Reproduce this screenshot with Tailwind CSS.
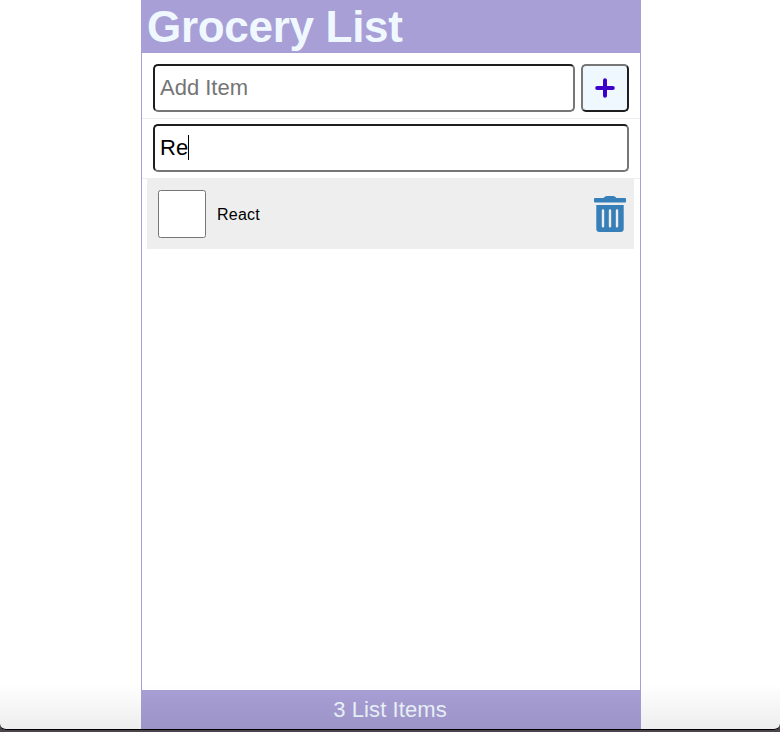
<!DOCTYPE html>
<html lang="en">
<head>
<meta charset="utf-8">
<title>Grocery List</title>
<script src="https://cdn.jsdelivr.net/npm/@tailwindcss/browser@4"></script>
</head>
<body class="h-[732px] overflow-hidden bg-[#4b454b] font-['Liberation_Sans',Arial,sans-serif]">
<div class="relative h-[730px] overflow-hidden rounded-b-[6px] border-b border-black bg-white">
  <div class="ml-[141px] flex h-full w-[500px] flex-col border-x border-[#a89fd8] bg-white">
    <header class="-mx-px flex h-[53px] shrink-0 items-center bg-[#a89fd6] pl-[6px]">
      <h1 class="text-[44px] font-bold leading-[53px] tracking-[-0.3px] whitespace-nowrap text-[aliceblue]">Grocery List</h1>
    </header>
    <main class="flex grow flex-col">
      <form class="flex h-[66px] gap-[6px] border-b border-[#eee] px-[11px] pt-[11px]">
        <input type="text" placeholder="Add Item" class="h-12 w-[422px] rounded-[5px] border-2 border-t-[#1e1e1e] border-l-[#1e1e1e] border-r-[#767676] border-b-[#767676] px-[5px] text-[22px] text-black placeholder:text-[#757575]">
        <button type="button" aria-label="Add Item" class="flex size-12 items-center justify-center rounded-[5px] border-2 border-t-[#767676] border-l-[#767676] border-r-[#1e1e1e] border-b-[#1e1e1e] bg-[aliceblue]">
          <svg class="size-5" viewBox="0 0 20 20" fill="none" stroke="#3c00c8" stroke-width="4" stroke-linecap="round"><path d="M10 2.200v15.600M2.200 10h15.600"/></svg>
        </button>
      </form>
      <form class="h-[60px] border-b border-[#eee] px-[11px] pt-[5px]">
        <div class="flex h-12 items-center rounded-[5px] border-2 border-t-[#1e1e1e] border-l-[#1e1e1e] border-r-[#767676] border-b-[#767676] px-[5px] text-[22px] text-black">
          <span class="pb-[2px]">Re</span><span class="mb-px h-[25px] w-px bg-black"></span>
        </div>
      </form>
      <ul class="pr-[6px] pl-[5px]">
        <li class="flex h-[70px] items-center bg-[#eee] pr-2 pl-[11px]">
          <span class="size-12 rounded-[2.5px] border border-[#767676] bg-white"></span>
          <span class="grow pt-[2px] pl-[11px] text-[16px] tracking-[0.25px] text-black">React</span>
          <svg class="h-9 w-8" viewBox="0 0 32 36" fill="#367fb8">
            <path fill-rule="evenodd" d="M1 2H9.500Q11 0 13 0H19Q21 0 22.500 2H31Q32 2 32 3V5.500Q32 6.500 31 6.500H1Q0 6.500 0 5.500V3Q0 2 1 2ZM2.300 9H29.700V33Q29.700 36 26.500 36H5.500Q2.300 36 2.300 33ZM7.800 14.500V30.300a1.200 1.200 0 0 0 2.400 0V14.500a1.200 1.200 0 0 0-2.400 0ZM14.800 14.500V30.300a1.200 1.200 0 0 0 2.400 0V14.500a1.200 1.200 0 0 0-2.400 0ZM21.800 14.500V30.300a1.200 1.200 0 0 0 2.400 0V14.500a1.200 1.200 0 0 0-2.400 0Z"/>
          </svg>
        </li>
      </ul>
    </main>
    <footer class="-mx-px flex h-[39px] shrink-0 items-center justify-center bg-[#a89fd6] text-[22px] tracking-[0.1px] text-[aliceblue]"><p class="-ml-0.5">3 List Items</p></footer>
  </div>
  <div class="pointer-events-none absolute inset-x-0 bottom-0 h-[45px] bg-linear-to-b from-black/0 to-black/7"></div>
</div>
</body>
</html>
